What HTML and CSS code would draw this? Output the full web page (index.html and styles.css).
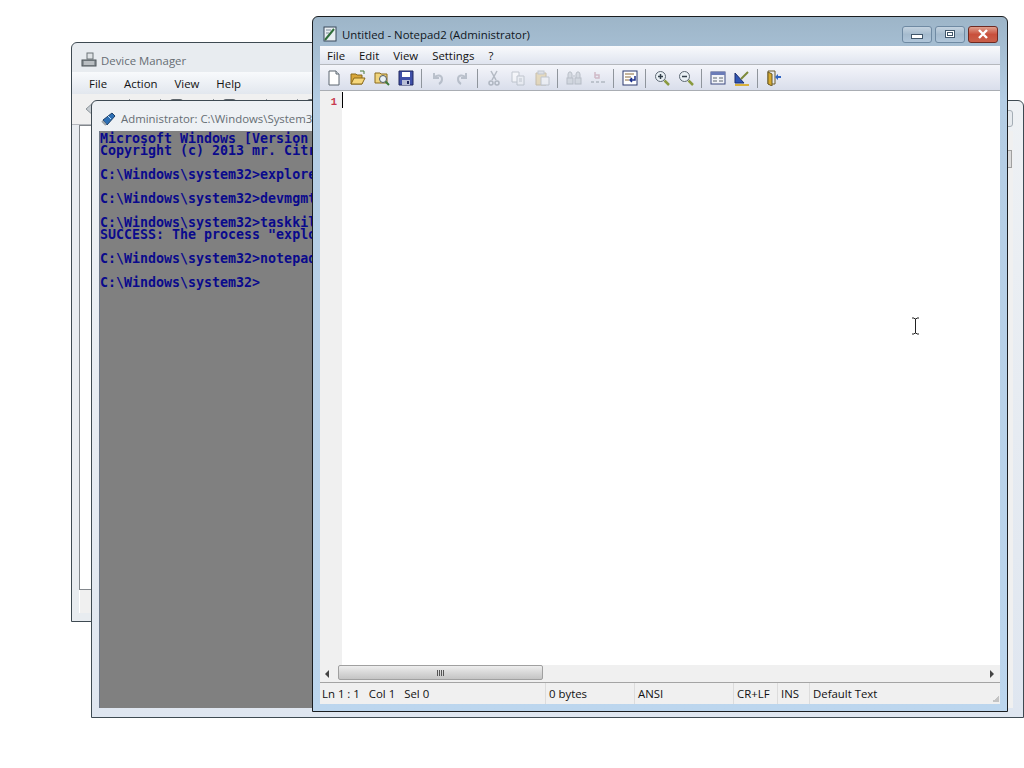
FILE: index.html
```html
<!DOCTYPE html>
<html lang="en">
<head>
    <meta charset="UTF-8">
    <meta name="viewport" content="width=device-width, initial-scale=1.0">
    <title>Notepad2 desktop</title>
    <link rel="stylesheet" href="styles.css">
</head>
<body>
    <!-- Device Manager, furthest back -->
    <div class="window devmgr">
        <div class="titlebar dim">
            <svg class="app-icon" viewBox="0 0 16 16">
                <rect x="6" y="1" width="6" height="6" fill="#dfe3e6" stroke="#6d7478"/>
                <rect x="1" y="8" width="14" height="6" fill="#8d9499" stroke="#4b5257"/>
                <path d="M3 10h10M3 12h10" stroke="#e5e8ea"/>
            </svg>
            <span>Device Manager</span>
        </div>
        <div class="devmgr-menu">
            <span>File</span><span>Action</span><span>View</span><span>Help</span>
        </div>
        <div class="devmgr-tools">
            <svg class="back-arrow" viewBox="0 0 12 16"><path d="M10 1 2 8l8 7z" fill="#c6ccd1" stroke="#8d959b"/></svg>
            <span class="stub stub-sep first"></span>
            <span class="stub stub-sep"></span>
            <span class="stub stub-icon"></span>
            <span class="stub stub-sep"></span>
            <span class="stub stub-icon"></span>
            <span class="stub stub-sep wide"></span>
            <span class="stub stub-sep wide"></span>
            <span class="stub stub-icon"></span>
        </div>
        <div class="devmgr-body"></div>
        <div class="devmgr-status"></div>
    </div>

    <!-- Console window -->
    <div class="window console">
        <div class="titlebar dim">
            <svg class="app-icon" viewBox="0 0 16 16">
                <path d="M2 9 11 2l3 3-8 9z" fill="#2c6fb5" stroke="#1d3f66"/>
                <path d="M1 10l4 4" stroke="#9aa2a8" stroke-width="2"/>
                <path d="M7 5l3 3" stroke="#bfe0f7"/>
            </svg>
            <span class="title-text">Administrator: C:\Windows\System32\cmd.exe</span>
            <div class="cap-btn cap-idle"></div>
        </div>
        <div class="console-main">
            <pre class="console-text">Microsoft Windows [Version 6.1.7601]
Copyright (c) 2013 mr. Citrix

C:\Windows\system32&gt;explorer

C:\Windows\system32&gt;devmgmt.msc

C:\Windows\system32&gt;taskkill /f /im explorer.exe
SUCCESS: The process "explorer.exe" has been terminated.

C:\Windows\system32&gt;notepad2

C:\Windows\system32&gt;</pre>
            <div class="console-scroll"><div class="console-thumb"></div></div>
        </div>
    </div>

    <!-- Notepad2, in front -->
    <div class="window notepad">
        <div class="titlebar">
            <svg class="app-icon" viewBox="0 0 16 16">
                <rect x="2" y="1" width="12" height="14" fill="#e8eef2" stroke="#39485a"/>
                <path d="M3 14 12 3" stroke="#2f6d3a" stroke-width="2"/>
                <path d="M4 4h5M4 7h3" stroke="#7d8b99"/>
            </svg>
            <span class="title-text">Untitled - Notepad2 (Administrator)</span>
            <div class="caption-btns">
                <div class="cap-btn"><span class="glyph-min"></span></div>
                <div class="cap-btn"><span class="glyph-max"></span></div>
                <div class="cap-btn cap-close">
                    <svg viewBox="0 0 12 10" width="12" height="10"><path d="M2 1l8 8M10 1 2 9" stroke="#fff" stroke-width="2.4"/></svg>
                </div>
            </div>
        </div>
        <div class="client">
            <div class="menubar">
                <span>File</span><span>Edit</span><span>View</span><span>Settings</span><span>?</span>
            </div>
            <div class="toolbar">
                <!-- new -->
                <svg class="tool" viewBox="0 0 16 16"><path d="M3 1h7l3 3v11H3z" fill="#fff" stroke="#5c6670"/><path d="M10 1v3h3" fill="#dde3e8" stroke="#5c6670"/></svg>
                <!-- open -->
                <svg class="tool" viewBox="0 0 16 16"><path d="M1 4h5l1 1h5v9H1z" fill="#d9a63a" stroke="#8a6a1c"/><path d="M1 14 4 8h11l-3 6z" fill="#f6d77c" stroke="#8a6a1c"/><path d="M10 1h4v3" fill="none" stroke="#4a7a3a"/></svg>
                <!-- browse -->
                <svg class="tool" viewBox="0 0 16 16"><path d="M1 3h5l1 1h6v9H1z" fill="#f0d47e" stroke="#8a6a1c"/><circle cx="9" cy="9" r="3.5" fill="#e8f1f7" stroke="#4f5a63"/><path d="M11.500 11.500 15 15" stroke="#3d7a3a" stroke-width="2"/></svg>
                <!-- save -->
                <svg class="tool" viewBox="0 0 16 16"><path d="M1 1h14v14H1z" fill="#3f4fa8" stroke="#20285f"/><rect x="4" y="2" width="8" height="5" fill="#fff"/><rect x="4" y="10" width="8" height="5" fill="#b9bfd6"/><rect x="9" y="11" width="2" height="3" fill="#20285f"/></svg>
                <span class="tool-sep"></span>
                <!-- undo / redo, disabled -->
                <svg class="tool off" viewBox="0 0 16 16"><path d="M4 3v5h5M4 8c3-4 8-3 8 1 0 2-1 4-3 5" fill="none" stroke="#8d98a5" stroke-width="2"/></svg>
                <svg class="tool off" viewBox="0 0 16 16"><path d="M12 3v5H7M12 8c-3-4-8-3-8 1 0 2 1 4 3 5" fill="none" stroke="#8d98a5" stroke-width="2"/></svg>
                <span class="tool-sep"></span>
                <!-- cut, copy, paste, disabled -->
                <svg class="tool off" viewBox="0 0 16 16"><path d="M5 1l5 9M11 1 6 10" stroke="#7f8994" stroke-width="1.5"/><circle cx="5" cy="13" r="2" fill="none" stroke="#7f8994" stroke-width="1.5"/><circle cx="11" cy="13" r="2" fill="none" stroke="#7f8994" stroke-width="1.5"/></svg>
                <svg class="tool off" viewBox="0 0 16 16"><path d="M2 2h7v10H2z" fill="#fff" stroke="#9aa3ac"/><path d="M7 6h7v9H7z" fill="#eef1f4" stroke="#9aa3ac"/><path d="M9 9h3M9 11h3" stroke="#9aa3ac"/></svg>
                <svg class="tool off" viewBox="0 0 16 16"><path d="M2 3h10v12H2z" fill="#e2c98a" stroke="#a89468"/><rect x="4" y="1" width="6" height="3" fill="#cfd4d9" stroke="#9aa3ac"/><path d="M7 7h8v8H7z" fill="#f3f4f6" stroke="#9aa3ac"/></svg>
                <span class="tool-sep"></span>
                <!-- find, replace, disabled -->
                <svg class="tool off" viewBox="0 0 16 16"><path d="M2 8V4l1-2h2l1 2v4M10 8V4l1-2h2l1 2v4" fill="#c2c9d0" stroke="#8b949d"/><rect x="1" y="8" width="6" height="6" fill="#c2c9d0" stroke="#8b949d"/><rect x="9" y="8" width="6" height="6" fill="#c2c9d0" stroke="#8b949d"/><path d="M7 6h2" stroke="#8b949d"/></svg>
                <svg class="tool off" viewBox="0 0 16 16"><path d="M5 8V2M5 5h4v3H5" fill="none" stroke="#b98a9c" stroke-width="1.5"/><path d="M1 12h3M6 12h3M11 12h4" stroke="#9aa3ac" stroke-width="2"/></svg>
                <span class="tool-sep"></span>
                <!-- word wrap -->
                <svg class="tool" viewBox="0 0 16 16"><rect x="1" y="1" width="14" height="14" fill="#fff" stroke="#2c3a70"/><path d="M3 4h9M3 7h6M3 10h4" stroke="#8a6a3a"/><path d="M13 6v4H8m2-2-2 2 2 2" fill="none" stroke="#1c2f8a" stroke-width="1.5"/></svg>
                <span class="tool-sep"></span>
                <!-- zoom in / out -->
                <svg class="tool" viewBox="0 0 16 16"><circle cx="6.500" cy="6.500" r="5" fill="#e9f0f5" stroke="#5d6873"/><path d="M4 6.500h5M6.500 4v5" stroke="#34404b" stroke-width="1.5"/><path d="M10.500 10.500 15 15" stroke="#8a9a3e" stroke-width="2.5"/></svg>
                <svg class="tool" viewBox="0 0 16 16"><circle cx="6.500" cy="6.500" r="5" fill="#e9f0f5" stroke="#5d6873"/><path d="M4 6.500h5" stroke="#34404b" stroke-width="1.5"/><path d="M10.500 10.500 15 15" stroke="#8a9a3e" stroke-width="2.5"/></svg>
                <span class="tool-sep"></span>
                <!-- settings -->
                <svg class="tool" viewBox="0 0 16 16"><rect x="1" y="2" width="14" height="12" fill="#f1f3f8" stroke="#3c4a80"/><rect x="1" y="2" width="14" height="3" fill="#6a7bb8"/><path d="M3 8h4M9 8h4M3 11h4M9 11h4" stroke="#5c6670"/></svg>
                <svg class="tool" viewBox="0 0 16 16"><path d="M1 13V3l9 10z" fill="#2f55b5" stroke="#1c2f6e"/><path d="M1 14h14v2H1z" fill="#d9b13c"/><path d="M7 9 14 2" stroke="#7c8a3a" stroke-width="2"/></svg>
                <span class="tool-sep"></span>
                <!-- exit -->
                <svg class="tool" viewBox="0 0 16 16"><path d="M2 1h7v13H2z" fill="#e7eaee" stroke="#6b5a28"/><path d="M2 2l4 2v12l-4-2z" fill="#d6aa2e" stroke="#6b5a28"/><path d="M15 6h-3V4l-3 3 3 3V8h3z" fill="#2f64c2"/></svg>
            </div>
            <div class="editor">
                <div class="gutter">1</div>
                <div class="text-area"><span class="caret"></span></div>
            </div>
            <div class="hscroll">
                <svg class="scroll-arrow" viewBox="0 0 5 8"><path d="M4 0v8L0 4z" fill="#444"/></svg>
                <div class="hthumb"><span class="grip"></span></div>
                <svg class="scroll-arrow" viewBox="0 0 5 8"><path d="M1 0v8l4-4z" fill="#444"/></svg>
            </div>
            <div class="statusbar">
                <div class="cell cell-pos"><span>Ln 1 : 1</span><span>Col 1</span><span>Sel 0</span></div>
                <div class="cell cell-bytes">0 bytes</div>
                <div class="cell cell-enc">ANSI</div>
                <div class="cell cell-eol">CR+LF</div>
                <div class="cell cell-ins">INS</div>
                <div class="cell cell-scheme">Default Text<span class="size-grip"></span></div>
            </div>
        </div>
    </div>

    <svg class="ibeam" viewBox="0 0 9 18" width="9" height="18">
        <path d="M1 1h2l1 1h1l1-1h2M4.500 2v14M1 17h2l1-1h1l1 1h2" fill="none" stroke="#222" stroke-width="1"/>
    </svg>
</body>
</html>
```

FILE: styles.css
```css
html, body {
    margin: 0;
    height: 100%;
}
body {
    background-color: #ffffff;
    font-family: "Open Sans", "Noto Sans", sans-serif;
    font-size: 11.4px;
    color: #111;
    overflow: hidden;
    position: relative;
}
/* windows sit on a free desktop */
.window {
    position: absolute;
    box-sizing: border-box;
    display: flex;
    flex-direction: column;
    border: 1px solid #3e4a52;
    border-radius: 6px 6px 0 0;
}
.devmgr {
    left: 71px;
    top: 42px;
    width: 300px;
    height: 580px;
    background: #e8ecf0;
    padding: 0 7px 8px 7px;
}
.console {
    left: 91px;
    top: 100px;
    width: 933px;
    height: 618px;
    background: linear-gradient(#eef1f4, #dfe6f0);
    padding: 0 10px 9px 7px;
}
.notepad {
    left: 312px;
    top: 16px;
    width: 696px;
    height: 696px;
    background: linear-gradient(#9db5c8, #b4cde4 12%, #bcd6ee);
    padding: 0 7px 7px 7px;
    border-color: #1a1d20;
}
.titlebar {
    display: flex;
    align-items: center;
    height: 29px;
    box-sizing: border-box;
    padding-top: 5px;
    flex: none;
    gap: 4px;
    color: #10171d;
}
.titlebar.dim {
    color: #666d73;
}
.console .titlebar {
    height: 30px;
}
.app-icon {
    width: 16px;
    height: 16px;
    flex: none;
    margin-left: 2px;
}
.title-text {
    flex: 1;
    white-space: nowrap;
}
.caption-btns {
    display: flex;
    gap: 3px;
    margin-right: 2px;
}
.cap-btn {
    box-sizing: border-box;
    width: 30px;
    height: 17px;
    flex: none;
    display: flex;
    align-items: center;
    justify-content: center;
    border: 1px solid #6f8aa3;
    border-radius: 3px;
    background: linear-gradient(#c4d3e0, #a5bbce 50%, #b0c6da);
}
.cap-close {
    border-color: #6e2a22;
    background: linear-gradient(#e0a08e, #c9503c 50%, #c9604a);
}
.cap-idle {
    width: 31px;
    border-color: #a4adb5;
    background: #e6eaee;
}
.glyph-min {
    width: 10px;
    height: 3px;
    margin-top: 5px;
    background: #fff;
    border: 1px solid #40566a;
}
.glyph-max {
    box-sizing: border-box;
    width: 10px;
    height: 8px;
    background: #fff;
    border: 1px solid #40566a;
    box-shadow: inset 0 0 0 1px #fff, inset 0 0 0 2px #40566a;
}
.client {
    flex: 1;
    display: flex;
    flex-direction: column;
    background: #f0f0f0;
    min-height: 0;
}
.menubar {
    height: 19px;
    flex: none;
    display: flex;
    align-items: center;
    gap: 14px;
    padding-left: 7px;
    background: linear-gradient(#f9fafc, #dfe4ef);
    border-bottom: 1px solid #b5b8bd;
    box-sizing: border-box;
}
.toolbar {
    height: 26px;
    flex: none;
    box-sizing: border-box;
    display: flex;
    align-items: center;
    gap: 8px;
    padding: 1px 0 0 6px;
    background: linear-gradient(#f4f5fa, #d9deeb);
    border-bottom: 1px solid #a9adb3;
}
.tool {
    width: 16px;
    height: 16px;
    flex: none;
}
.tool.off {
    opacity: 0.5;
}
.tool-sep {
    width: 1px;
    height: 19px;
    margin-left: -1px;
    background: #8f959c;
    flex: none;
}
.editor {
    flex: 1;
    display: flex;
    background: #ffffff;
    min-height: 0;
}
.gutter {
    width: 22px;
    flex: none;
    box-sizing: border-box;
    background: #f0f0f0;
    color: #c8394f;
    font-family: "Liberation Mono", monospace;
    font-size: 10.5px;
    font-weight: bold;
    text-align: right;
    padding: 5px 5px 0 0;
}
.text-area {
    flex: 1;
    padding-top: 1px;
}
.caret {
    display: block;
    width: 1px;
    height: 16px;
    background: #000;
}
.hscroll {
    height: 17px;
    flex: none;
    display: flex;
    align-items: center;
    justify-content: space-between;
    background: #f0f0f0;
    padding: 0 6px 0 5px;
    box-sizing: border-box;
}
.scroll-arrow {
    width: 5px;
    height: 8px;
    flex: none;
}
.hthumb {
    box-sizing: border-box;
    width: 205px;
    height: 15px;
    margin: 0 auto 2px 8px;
    display: flex;
    align-items: center;
    justify-content: center;
    background: linear-gradient(#eeeeee, #d8d8d8 50%, #c4c4c4);
    border: 1px solid #a0a0a0;
    border-radius: 2px;
}
.grip {
    width: 7px;
    height: 6px;
    background: repeating-linear-gradient(90deg, #555 0, #555 1px, transparent 1px, transparent 2px);
}
.statusbar {
    height: 22px;
    flex: none;
    box-sizing: border-box;
    display: flex;
    align-items: center;
    background: #f0f0f0;
    border-top: 1px solid #a4a4a4;
}
.cell {
    height: 100%;
    box-sizing: border-box;
    display: flex;
    align-items: center;
    border-right: 1px solid #dcdcdc;
    padding-left: 3px;
    white-space: nowrap;
}
.cell-pos {
    width: 226px;
    gap: 9px;
    padding-left: 2px;
}
.cell-bytes {
    width: 89px;
}
.cell-enc {
    width: 99px;
}
.cell-eol {
    width: 44px;
}
.cell-ins {
    width: 32px;
}
.cell-scheme {
    flex: 1;
    border-right: none;
    padding-left: 3px;
    justify-content: space-between;
}
.size-grip {
    width: 7px;
    height: 7px;
    align-self: flex-end;
    margin: 0 1px 2px 0;
    background: linear-gradient(135deg, transparent 50%, #c4c4c4 50%);
}
.devmgr-menu {
    height: 22px;
    flex: none;
    display: flex;
    align-items: center;
    gap: 17px;
    margin: 0 -7px;
    padding-left: 17px;
    background: linear-gradient(#f8fafc, #e2e7ee);
}
.devmgr-tools {
    height: 31px;
    flex: none;
    display: flex;
    align-items: flex-start;
    margin: 0 -7px;
    padding: 5px 0 0 12px;
    box-sizing: border-box;
    background: #f0f0f0;
    border-bottom: 1px solid #b5b8bd;
}
.back-arrow {
    width: 12px;
    height: 16px;
    margin-top: 2px;
}
/* toolbar items, nearly all hidden under the console */
.stub {
    flex: none;
    background: #8f959c;
    height: 4px;
}
.stub-sep {
    width: 1px;
    margin-left: 30px;
}
.stub-sep.first {
    margin-left: 33px;
}
.stub-sep.wide {
    margin-left: 30px;
}
.stub-icon {
    width: 13px;
    margin-left: 9px;
    background: #5f666c;
    border-radius: 3px 3px 0 0;
}
.devmgr-body {
    flex: 1;
    background: #ffffff;
    border: 1px solid #82878c;
}
.devmgr-status {
    height: 23px;
    flex: none;
    background: #f0f0f0;
    border-left: 1px solid #fff;
}
.console-main {
    flex: 1;
    display: flex;
    min-height: 0;
    background: #808080;
    border-left: 1px solid #6e7888;
}
.console-text {
    flex: 1;
    margin: 0;
    padding: 2px 0 0 0;
    overflow: hidden;
    font-family: "DejaVu Sans Mono", "Liberation Mono", monospace;
    font-size: 13.3px;
    font-weight: bold;
    line-height: 12px;
    color: #0a0a8c;
}
.console-scroll {
    width: 17px;
    flex: none;
    background: #f0f0f0;
    padding: 19px 1px 0 0;
    box-sizing: border-box;
}
.console-thumb {
    width: 100%;
    height: 18px;
    box-sizing: border-box;
    background: #dcdcdc;
    border: 1px solid #a0a0a0;
}
/* mouse pointer, over everything */
.ibeam {
    position: absolute;
    left: 911px;
    top: 317px;
}
```
